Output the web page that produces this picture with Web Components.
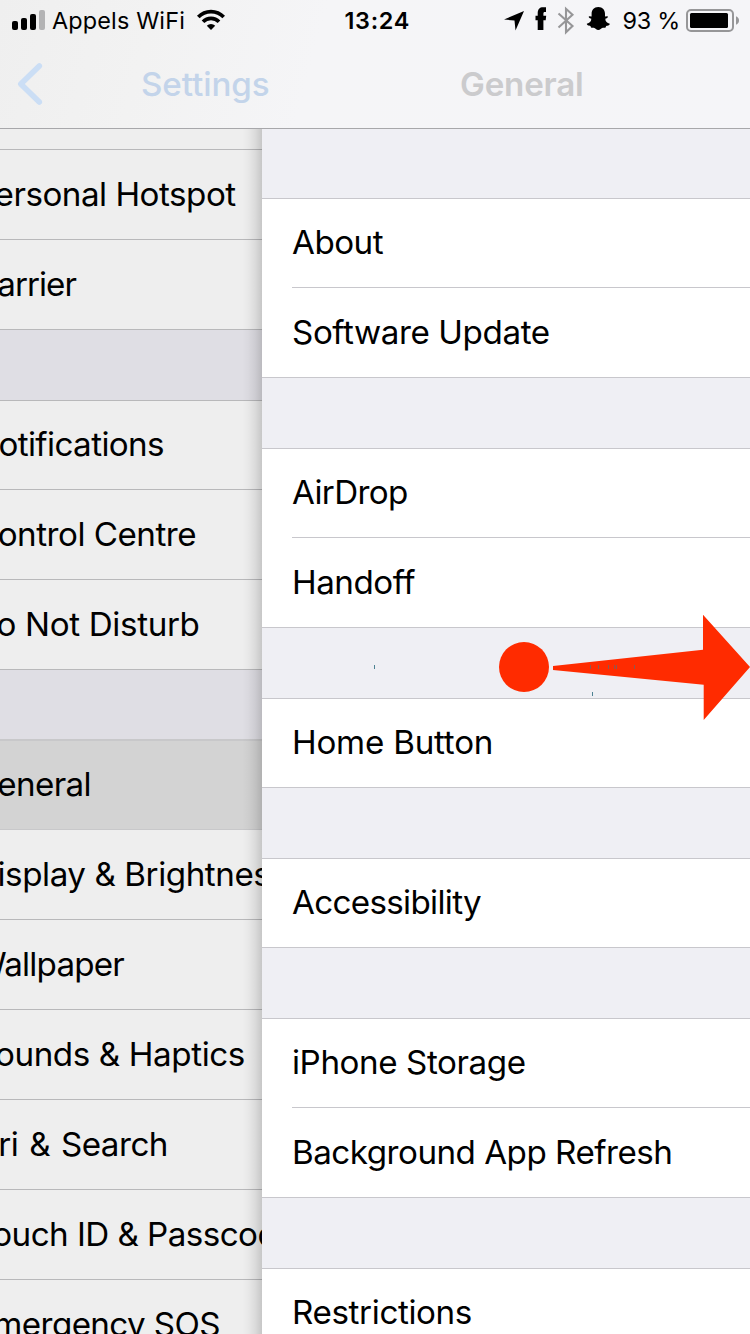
<!DOCTYPE html>
<html lang="en">
<head>
<meta charset="utf-8">
<title>Settings</title>
<style>
html,body{margin:0;width:750px;height:1334px;overflow:hidden;background:#efeff4;font-family:Inter,"Liberation Sans",sans-serif;color:#000}
</style>
</head>
<body>
<settings-screen></settings-screen>
<script>
const define = (name, html, extra) => customElements.define(name, class extends HTMLElement {
  connectedCallback() {
    if (this.shadowRoot) return;
    this.attachShadow({ mode: 'open' }).innerHTML = html;
    if (extra) extra(this, this.shadowRoot);
  }
});

// Text tracked so that its advance equals the "w" attribute.
define('fit-text', `<style>:host{display:block;flex:none;white-space:pre}span{display:inline-block}</style><span><slot></slot></span>`, (el, root) => {
  const span = root.querySelector('span');
  const w = parseFloat(el.getAttribute('w'));
  const natural = span.getBoundingClientRect().width;
  span.style.letterSpacing = ((w - natural) / el.textContent.length) + 'px';
});

define('status-bar', `<style>
:host{display:flex;height:40px;align-items:center;font-size:23.4px;line-height:40px;box-sizing:border-box;padding:0 9px 0 12px}
svg{display:block;flex:none}
.side{display:flex;align-items:center;height:40px}
.left{width:332.5px;flex:none}.right{margin-left:94px}
fit-text{padding-top:2px;height:40px}
</style>
<div class="side left">
<svg width="33" height="40"><rect y="21" width="6" height="9" rx="2"/><rect x="9" y="18" width="6" height="12" rx="2"/><rect x="18" y="14" width="6" height="16" rx="2"/><rect x="27" y="10" width="6" height="20" rx="2" fill="#b3b3b4"/></svg>
<fit-text w="133" style="margin-left:7px">Appels WiFi</fit-text>
<svg width="30" height="40" viewBox="0 0 30 40" style="margin-left:11px"><g fill="none" stroke="#000" stroke-width="3.6"><path d="M2.3 17.1A17.4 17.4 0 0 1 27.7 17.1"/><path d="M7 21.8A11 11 0 0 1 23 21.8"/></g><path d="M15 30L10.8 25.8A6 6 0 0 1 19.2 25.8Z"/></svg>
</div>
<fit-text w="65.5" style="font-weight:600">13:24</fit-text>
<div class="side right">
<svg width="106" height="40" viewBox="504 0 106 40" overflow="visible"><path d="M504 19.5L524 11L515.5 30.5L514.5 20.5Z"/><path d="M537.7 30V20.3H535.5V15.8H537.7V13.4C537.7 9 539.8 7.2 543 7.2H546V12H544.9C543.7 12 543.4 12.7 543.4 13.7V15.8H546.2L545.7 20.3H543.4V30Z"/><path d="M558.5 13.5L572.5 26L566 32.2V8.8L572.5 14.8L558.5 27.5" fill="none" stroke="#969698" stroke-width="2.1"/><path d="M598.3 7C602.7 7 605 10 605 13.8V16.5L607.5 16.2C608.5 16.8 607.6 18 605.3 18.8C605.4 21.8 607 23 609.8 23.8C610 25.6 606.6 25.8 606 26.2C605.8 28 605.2 27.8 602.8 27.7C601.2 27.8 600.2 30 598.3 30C596.4 30 595.4 27.8 593.8 27.7C591.4 27.8 590.8 28 590.6 26.2C590 25.8 586.6 25.6 586.8 23.8C589.6 23 591.2 21.8 591.3 18.8C589 18 588.1 16.8 589.1 16.2L591.6 16.5V13.8C591.6 10 593.9 7 598.3 7Z"/></svg>
<fit-text w="57.5" style="margin-left:12.5px">93 %</fit-text>
<svg width="54" height="40" viewBox="686 0 54 40" style="margin-left:6px"><rect x="687" y="10" width="46" height="21" rx="4" fill="none" stroke="#969698" stroke-width="2"/><rect x="690" y="13" width="38" height="15" rx="1.5"/><path d="M736 16.3Q739 17.5 739 20.5T736 24.7Z" fill="#969698"/></svg>
</div>`);

define('nav-bar', `<style>
:host{display:block;height:129px;box-sizing:border-box;border-bottom:1px solid #a7a7aa;background:linear-gradient(105deg,#efefef 0,#f2f2f2 20%,#f5f5f7 42%,#f5f5f8 100%);position:relative;z-index:3}
.bar{display:flex;height:88px;font-size:33.2px;line-height:88px}
svg{display:block;flex:none}
</style>
<status-bar></status-bar>
<div class="bar">
<svg width="141" height="88"><path d="M39.3 25.9L20.8 43.9L39.3 62.1" fill="none" stroke="#cbdef5" stroke-width="5.6" stroke-linecap="round" stroke-linejoin="round"/></svg>
<fit-text w="128.5" style="color:#c3d4ea;font-weight:500">Settings</fit-text>
<fit-text w="123.5" style="margin-left:190.5px;color:#cbcbcd;font-weight:600">General</fit-text>
</div>`);

define('list-row', `<style>
:host{display:block;position:relative;height:90px;background:var(--row);font-size:33.2px;line-height:88px}
.t{padding-left:var(--start)}
:host::after{content:"";position:absolute;left:var(--inset);right:0;bottom:0;height:1px;background:var(--line)}
:host(:first-child)::before{content:"";position:absolute;left:0;right:0;top:0;height:1px;background:var(--line)}
:host(:last-child)::after{left:0}
:host([selected]){background:#d3d3d3;--line:#c8c8ca}
:host([selected])::before{top:-1px!important;height:2px!important}
</style><div class="t"><slot></slot></div>`);

define('list-group', `<style>:host{display:block;margin-bottom:70px}</style><slot></slot>`);

define('settings-list', `<style>
:host{display:block;overflow:hidden;height:1205px;--row:#eee;--line:#b8b8ba;--inset:0px;--start:0px;background:#dfdee4;width:262px;flex:none;position:relative}
.in{margin-top:-69px}
list-row fit-text{margin-left:-26px}
.shade{position:absolute;top:0;bottom:0;right:0;width:20px;background:linear-gradient(90deg,#0000,#00000006 30%,#00000014 65%,#0000002a)}
</style><div class="in">
<list-group><list-row></list-row>
<list-row><fit-text w="261.7">Personal Hotspot</fit-text></list-row>
<list-row><fit-text w="102">Carrier</fit-text></list-row></list-group>
<list-group><list-row><fit-text w="190">Notifications</fit-text></list-row>
<list-row><fit-text w="222">Control Centre</fit-text></list-row>
<list-row><fit-text style="margin-left:-27px" w="226.5">Do Not Disturb</fit-text></list-row></list-group>
<list-group><list-row selected><fit-text style="margin-left:-27px" w="118">General</fit-text></list-row>
<list-row><fit-text w="313.5">Display &amp; Brightness</fit-text></list-row>
<list-row><fit-text w="150">Wallpaper</fit-text></list-row>
<list-row><fit-text w="271">Sounds &amp; Haptics</fit-text></list-row>
<list-row><fit-text style="margin-left:-30px;word-spacing:2px" w="198">Siri &amp; Search</fit-text></list-row>
<list-row><fit-text w="322">Touch ID &amp; Passcode</fit-text></list-row>
<list-row><fit-text w="246">Emergency SOS</fit-text></list-row></list-group>
</div><div class="shade"></div>`);

define('general-list', `<style>
:host{display:block;overflow:hidden;height:1205px;flex:1;background:#efeff4;--row:#fff;--line:#c8c7cc;--inset:30px;--start:30px;padding-top:69px;box-sizing:border-box}
</style>
<list-group><list-row><fit-text w="91">About</fit-text></list-row><list-row><fit-text w="257.7">Software Update</fit-text></list-row></list-group>
<list-group><list-row><fit-text w="115.7">AirDrop</fit-text></list-row><list-row><fit-text w="123">Handoff</fit-text></list-row></list-group>
<list-group><list-row><fit-text w="201.2">Home Button</fit-text></list-row></list-group>
<list-group><list-row><fit-text w="189">Accessibility</fit-text></list-row></list-group>
<list-group><list-row><fit-text w="233.7">iPhone Storage</fit-text></list-row><list-row><fit-text w="380.4">Background App Refresh</fit-text></list-row></list-group>
<list-group><list-row><fit-text w="180">Restrictions</fit-text></list-row><list-row></list-row></list-group>`);

// Swipe direction marker lying over the lists.
define('swipe-arrow', `<style>:host{position:absolute;left:360px;top:600px;z-index:4}svg{display:block}</style>
<svg width="390" height="130" viewBox="360 600 390 130"><g fill="#ff2b00"><circle cx="524" cy="667" r="25"/><path d="M553 666L703 649.7V614.7L750 667L703.7 720V684.8L553 670Z"/></g>
<g fill="#4d8292"><rect x="374" y="665" width="1" height="4"/><rect x="592" y="692" width="1" height="4"/></g>
<g fill="#8c5950"><rect x="590" y="665" width="1" height="4"/><rect x="598" y="665" width="1" height="4"/><rect x="608" y="665" width="1" height="4"/><rect x="614" y="665" width="1" height="4"/><rect x="616" y="665" width="1" height="4"/><rect x="634" y="665" width="1" height="4"/></g></svg>`);

define('settings-screen', `<style>:host{display:block;position:relative;width:750px;height:1334px;overflow:hidden}.body{display:flex}</style>
<nav-bar></nav-bar><div class="body"><settings-list></settings-list><general-list></general-list></div><swipe-arrow></swipe-arrow>`);
</script>
</body>
</html>
